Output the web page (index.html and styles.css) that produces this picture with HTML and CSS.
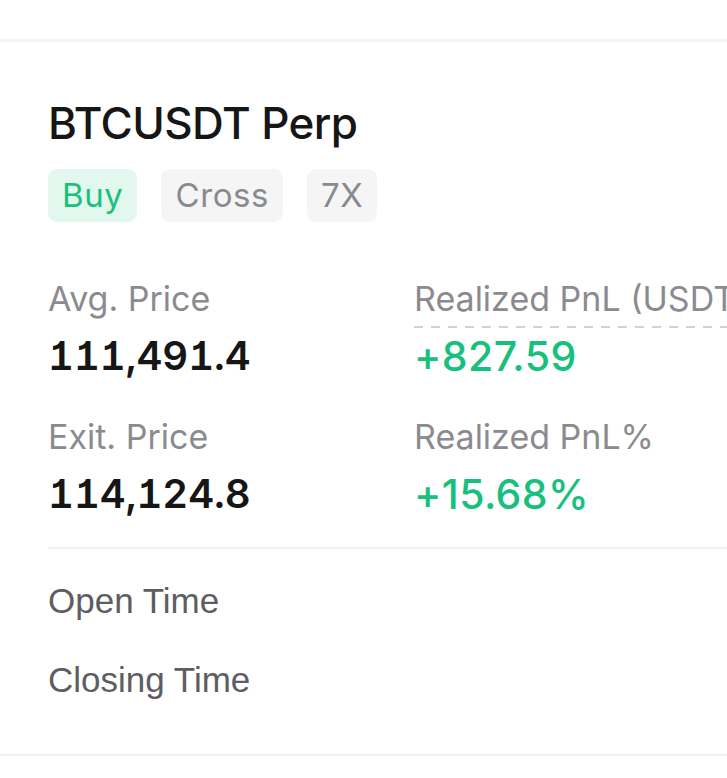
FILE: index.html
```html
<!DOCTYPE html>
<html lang="en">
<head>
    <meta charset="UTF-8">
    <meta name="viewport" content="width=device-width, initial-scale=1.0">
    <title>Position History - BTCUSDT Perp</title>
    <link rel="stylesheet" href="styles.css">
</head>

<body>
  <div class="top-line"></div>

  <div class="position-card">
    <h2 class="pair-title">BTCUSDT Perp</h2>

    <div class="tags">
      <span class="tag buy">Buy</span>
      <span class="tag">Cross</span>
      <span class="tag">7X</span>
    </div>

    <div class="stats">
      <div class="stat">
        <div class="label">Avg. Price</div>
        <div class="value">111,491.4</div>
      </div>
      <div class="stat">
        <div class="label"><span class="dashed">Realized PnL (USDT)</span></div>
        <div class="value profit">+827.59</div>
      </div>
      <div class="stat">
        <div class="label">Exit. Price</div>
        <div class="value">114,124.8</div>
      </div>
      <div class="stat">
        <div class="label">Realized PnL%</div>
        <div class="value profit">+15.68%</div>
      </div>
    </div>

    <div class="divider"></div>

    <div class="time-rows">
      <div class="time-row">Open Time</div>
      <div class="time-row">Closing Time</div>
    </div>
  </div>

  <div class="bottom-line"></div>
</body>

</html>
```

FILE: styles.css
```css
* {
    box-sizing: border-box;
    margin: 0;
    padding: 0;
}

body {
    background-color: #ffffff;
    font-family: Inter, 'Noto Sans', sans-serif;
    overflow: hidden;
}

.top-line {
    height: 3px;
    margin-top: 39px;
    background-color: #f3f3f4;
}

.position-card {
    padding-left: 48px;
    overflow: hidden;
}

.pair-title {
    margin-top: 55px;
    font-size: 44px;
    line-height: 52px;
    font-weight: 500;
    color: #161616;
    letter-spacing: -0.6px;
}

.tags {
    display: flex;
    gap: 24px;
    margin-top: 20px;
}

.tag {
    height: 53px;
    line-height: 53px;
    padding: 0 14px;
    border-radius: 9px;
    font-size: 33px;
    letter-spacing: 0.6px;
    color: #8a8a8e;
    background-color: #f5f5f6;
}

.tag.buy {
    color: #1bbf7d;
    background-color: #e2f8ef;
}

.stats {
    display: grid;
    grid-template-columns: 366px 1fr;
    row-gap: 37px;
    margin-top: 57px;
}

.stat {
    white-space: nowrap;
    overflow: hidden;
}

.stat .label {
    font-size: 34px;
    line-height: 40px;
    padding-bottom: 11px;
    color: #8b8b8f;
}

.dashed {
    display: inline-block;
    padding-bottom: 9px;
    margin-bottom: -11px;
    background: repeating-linear-gradient(to right, #d2d2d4 0 9px, transparent 9px 17px) left bottom / 100% 2px no-repeat;
}

.stat .value {
    margin-top: 2px;
    font-size: 40px;
    line-height: 48px;
    font-weight: 600;
    color: #161616;
    font-feature-settings: "tnum" 1, "cv01" 1;
}

.stat .value.profit {
    font-size: 41px;
    font-weight: 500;
    letter-spacing: 0.4px;
    color: #18c07e;
    font-feature-settings: normal;
}

.divider {
    height: 2px;
    margin-top: 29px;
    background-color: #f2f2f3;
}

.time-rows {
    display: flex;
    flex-direction: column;
    gap: 39px;
    margin-top: 32px;
}

.time-row {
    font-family: 'Liberation Sans', Arial, sans-serif;
    font-size: 35px;
    line-height: 40px;
    color: #5d5d63;
}

.bottom-line {
    height: 2px;
    margin-top: 54px;
    background-color: #f2f2f3;
}
```
